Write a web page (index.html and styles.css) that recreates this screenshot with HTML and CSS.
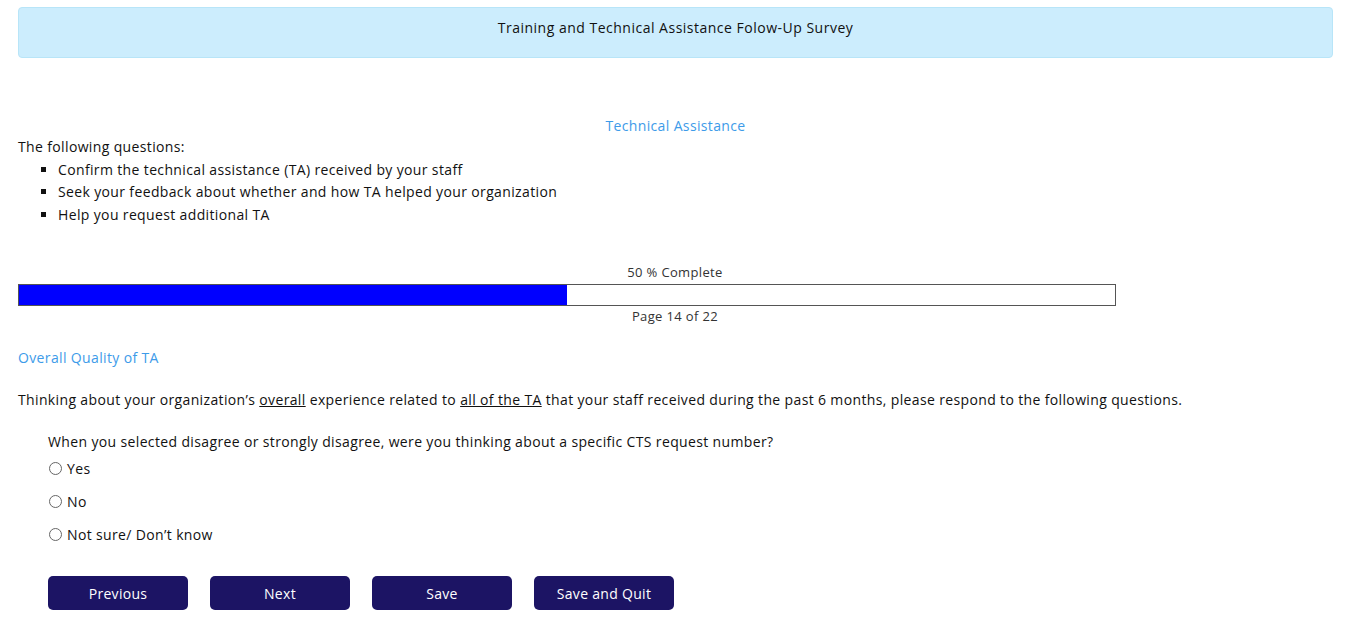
FILE: index.html
```html
<!DOCTYPE html>
<html>
<head>
<meta charset="utf-8">
<link rel="stylesheet" href="styles.css">
</head>
<body>
<div class="page">
  <div class="header">Training and Technical Assistance Folow-Up Survey</div>
  <div class="section-title">Technical Assistance</div>
  <div class="intro">
    <div>The following questions:</div>
    <ul class="bullets">
      <li>Confirm the technical assistance (TA) received by your staff</li>
      <li>Seek your feedback about whether and how TA helped your organization</li>
      <li>Help you request additional TA</li>
    </ul>
  </div>
  <div class="progress-block">
    <div class="progress-label">50 % Complete</div>
    <div class="progress"><div class="progress-fill" style="width:50%"></div></div>
    <div class="progress-label page-label">Page 14 of 22</div>
  </div>
  <div class="subhead">Overall Quality of TA</div>
  <p class="lead">Thinking about your organization’s <u>overall</u> experience related to <u>all of the TA</u> that your staff received during the past 6 months, please respond to the following questions.</p>
  <div class="question">
    <div class="q-text">When you selected disagree or strongly disagree, were you thinking about a specific CTS request number?</div>
    <label class="opt"><span class="radio"></span>Yes</label>
    <label class="opt"><span class="radio"></span>No</label>
    <label class="opt"><span class="radio"></span>Not sure/ Don’t know</label>
  </div>
  <div class="buttons">
    <button class="btn">Previous</button>
    <button class="btn">Next</button>
    <button class="btn">Save</button>
    <button class="btn">Save and Quit</button>
  </div>
</div>
</body>
</html>
```
FILE: styles.css
```css
html, body { margin: 0; padding: 0; background: #fff; }
body {
  font-family: "Open Sans", "Noto Sans", sans-serif;
  font-size: 14px;
  letter-spacing: 0.36px;
  color: #111;
}
.page { padding: 7px 21px 0 18px; }
.header {
  height: 51px;
  border: 1px solid #b8e5f8;
  background: #ccedfd;
  border-radius: 4px;
  display: flex;
  align-items: center;
  justify-content: center;
  color: #111;
  padding-bottom: 10px;
  box-sizing: border-box;
  letter-spacing: 0.5px;
}
.section-title {
  margin-top: 58px;
  text-align: center;
  color: #3d9be9;
  line-height: 20px;
}
.intro { line-height: 22.5px; }
.bullets { margin: 0; padding: 0 0 0 40px; list-style: square; }
.progress-block { margin-top: 37px; width: 1098px; }
.progress-label { text-align: center; color: #333; font-size: 13px; line-height: 18px; padding-left: 216px; }
.progress { height: 22px; border: 1px solid #555; box-sizing: border-box; margin-top: 3px; }
.progress-fill { height: 100%; background: #0000ff; }
.page-label { line-height: 20px; }
.subhead { margin-top: 22px; color: #3d9be9; line-height: 20px; }
.lead { margin: 22px 0 0 0; line-height: 20px; }
.question { margin: 22px 0 0 30px; }
.q-text { line-height: 20px; }
.opt { display: flex; align-items: center; height: 33px; }
.radio {
  width: 11px; height: 11px; border: 1px solid #666; border-radius: 50%;
  margin: 0 5px 0 1px; box-sizing: content-box; flex: none;
}
.buttons { display: flex; gap: 22px; margin: 25px 0 0 30px; }
.btn {
  width: 140px; height: 34px;
  background: #1c1464; color: #fff;
  border: none; border-radius: 5px;
  font-family: inherit; font-size: 14px; font-weight: 500; letter-spacing: 0.3px;
}
```
